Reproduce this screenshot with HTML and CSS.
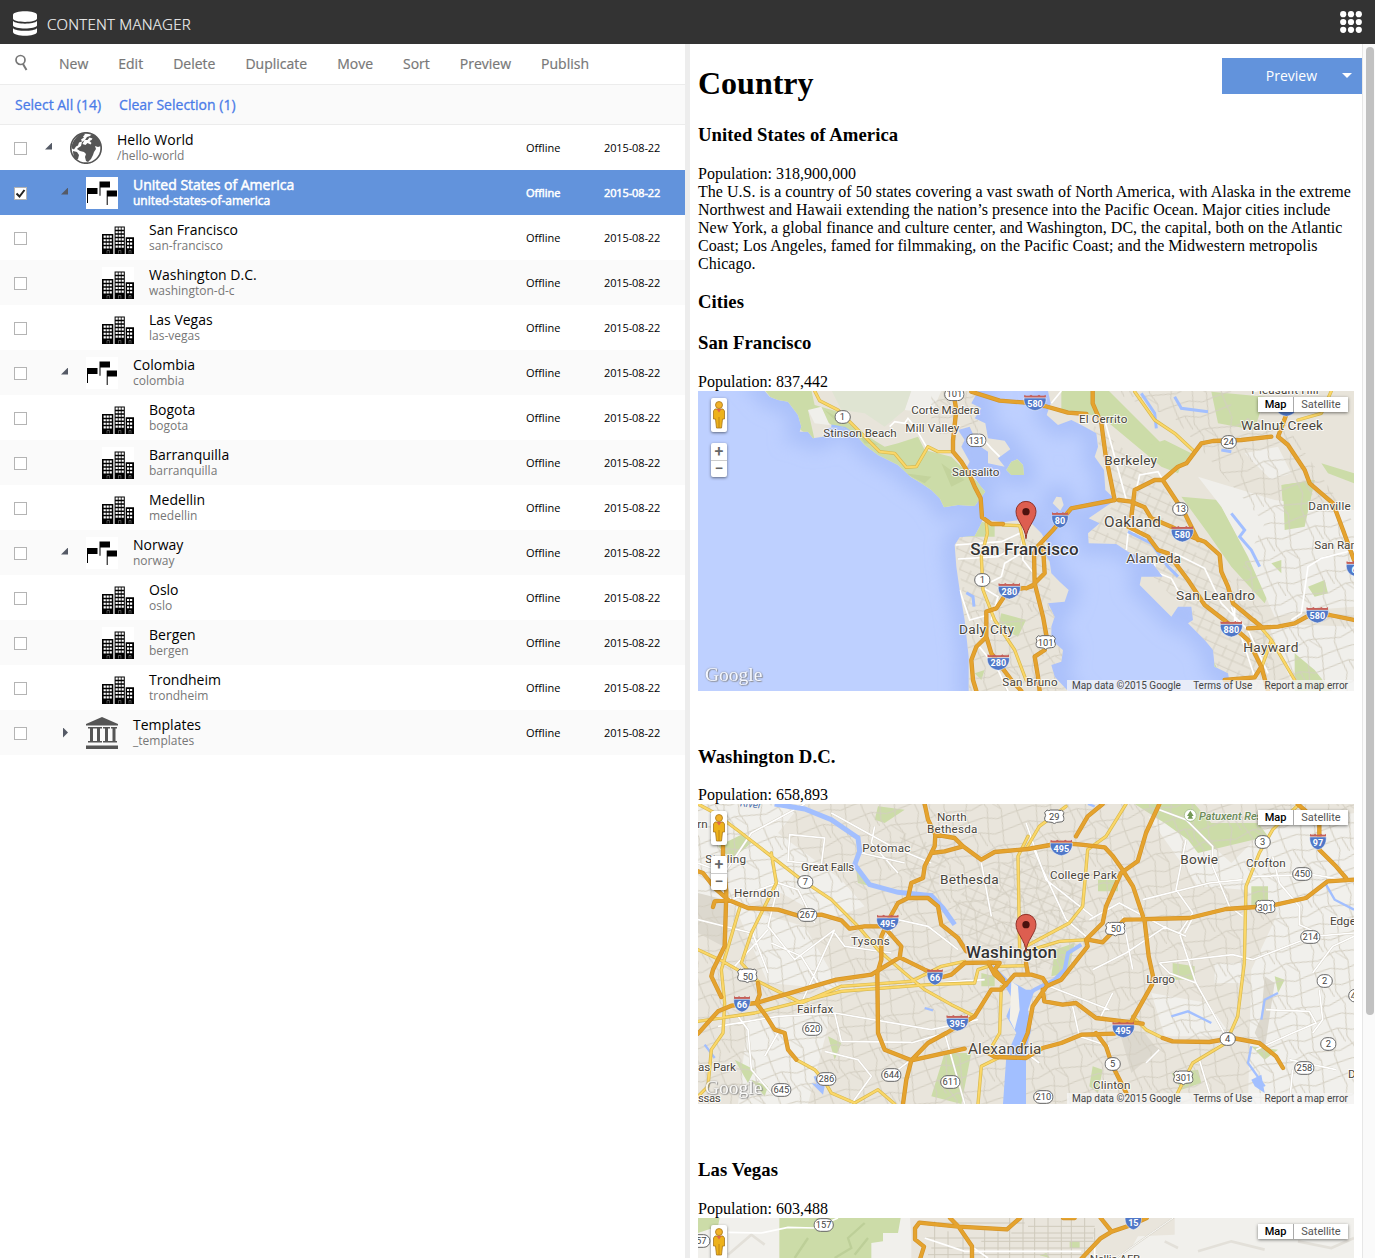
FILE: index.html
```html
<!DOCTYPE html>
<html lang="en">
<head>
<meta charset="utf-8">
<title>Content Manager</title>
<link rel="stylesheet" href="styles.css">
</head>
<body>
<svg class="defs" width="0" height="0" aria-hidden="true">
  <symbol id="i-city" viewBox="0 0 32 32">
    <rect class="paper" width="32" height="32"/>
    <path d="M0 12h11.300v20H0zM12.600 4.500h10.200V32H12.600zM23.700 15.300H32V32h-8.300z"/>
    <path class="pane" d="M1.600 14.600h8.200M1.600 18.200h8.200M1.600 21.800h8.200M1.600 25.400h8.200M13.600 6.600h8.200M13.600 10.200h8.200M13.600 13.800h8.200M13.600 17.400h8.200M13.600 21h8.200M13.600 24.600h8.200M25 18h5.600M25 21.600h5.600M25 25.200h5.600"/>
    <path class="door" d="M5 31.500v-3h2.400v3M16.500 31.500v-3h2.400v3M27 31.500v-3h2v3"/>
  </symbol>
  <symbol id="i-flags" viewBox="0 0 32 32">
    <rect class="paper" width="32" height="32"/>
    <path d="M1 11h10.500v6H2v9H1zM13.500 4.500H24v6h-9.500v8.300h-1zM20.700 13.500H31v6h-9.300V28h-1z"/>
  </symbol>
  <symbol id="i-globe" viewBox="0 0 32 32">
    <circle cx="16" cy="16" r="15.200" fill="#fff" stroke="#555" stroke-width="1.700"/>
    <path fill="#555" d="M3 10C6 5 9 2 13 1.500l2 1-2 2 1 1-3 2 1 2-3 1-1 3-2 1-2 3-2-1L1.500 14zM8 16l3-2 1-4 3-2 2-3 3-1 2-2c5 2 8 7 9 12l-3 1-3-1 1 3-2 3-1 3-2 4-3 3-2-1-1-4 1-3-2-2-4-1-3-2zM3 19l4 1 2 3-1 4-2 1C4 26 3 22 3 19z"/>
    <path fill="#fff" d="M12.500 12l3 1 2-2 3 1.500 1-1.500-2-2 2-1 1-1.500-3-1-2 2.500-3 0z"/>
  </symbol>
  <symbol id="i-bank" viewBox="0 0 32 32">
    <path fill="#555" d="M16 0l16 7v1.500H0V7zM2 10h7v1.400H7V24h2v1.500H2V24h2V11.400H2zM9 10h7v1.400h-2V24h2v1.500H9V24h2V11.400H9zM17 10h7v1.400h-2V24h2v1.500h-7V24h2V11.400h-2zM25 10h6v1.400h-1.500V24H31v1.500h-7V24h2.500V11.400H25zM0 28.500h32V32H0z"/>
  </symbol>
  <symbol id="s-i" viewBox="0 0 70 50" preserveAspectRatio="none" overflow="visible">
    <path d="M3 4h64v6H3z" fill="#c4605a"/><path d="M3 1l5 4h10l5-4 5 4h14l5-4 5 4h10l5-4v7H3z" fill="#c4605a"/>
    <path d="M2 11h66c2 18-9 34-33 38C11 45 0 29 2 11z" fill="#5078c8" stroke="#fff" stroke-width="1.500"/>
  </symbol>
  <symbol id="s-o" viewBox="0 0 62 42"><rect x="2" y="2" width="58" height="38" rx="19" fill="#fff" stroke="#666" stroke-width="3"/></symbol>
  <symbol id="s-c" viewBox="0 0 50 42"><rect x="2" y="2" width="46" height="38" rx="19" fill="#fff" stroke="#666" stroke-width="3"/></symbol>
  <symbol id="s-u" viewBox="0 0 62 46"><path d="M9 3q5 4 11 0h22q6 4 11 0l7 8q-6 8 0 16 1 12-12 12-12 0-17 5-5-5-17-5Q1 39 2 27q6-8 0-16z" fill="#fff" stroke="#666" stroke-width="3"/></symbol>
  <symbol id="pin" viewBox="0 0 66 116">
    <path d="M33 114C31 78 3 60 3 32a30 30 0 0 1 60 0C63 60 35 78 33 114z" fill="#dd5e50" stroke="#8f3229" stroke-width="3"/>
    <circle cx="33" cy="33" r="11" fill="#4c120e"/>
  </symbol>
  <symbol id="pegman" viewBox="0 0 12 28">
    <circle cx="6" cy="4" r="3.500" fill="#f2b229" stroke="#a8761b" stroke-width=".8"/>
    <path d="M2 8h8l1.500 2v8H9.500l-1 9h-5l-1-9H.5v-8z" fill="#edb21c" stroke="#a8761b" stroke-width=".8"/>
    <path d="M3.500 8h5L6 11.500z" fill="#df6549"/><path d="M6 16v11" stroke="#b57b12" stroke-width=".8"/>
  </symbol>
  <pattern id="streets" width="150" height="138" patternUnits="userSpaceOnUse" patternTransform="rotate(-14)">
    <path d="M0 22L48 15 92 30 150 22M0 75L40 82 95 66 150 75M0 118L70 112 110 125 150 118M25 0L35 50 20 90 25 138M78 0L70 45 88 88 78 138M122 0L112 60 128 100 122 138M48 15L62 60M95 66L128 100" fill="none" stroke="#d3cec1" stroke-width="3"/>
  </pattern>
  <pattern id="blocks" width="66" height="54" patternUnits="userSpaceOnUse" patternTransform="rotate(24)">
    <path d="M0 10H66M0 36H66M12 0V54M45 0V36" fill="none" stroke="#d0cbbe" stroke-width="2.500"/>
  </pattern>
  <filter id="soft"><feGaussianBlur stdDeviation="26"/></filter>
</svg>

<header class="topbar">
  <svg class="logo" viewBox="0 0 24 25"><path fill="#fff" d="M0 4C0-1 24-1 24 4v3.500C24 12 0 12 0 7.500zM0 10c3 3.500 21 3.500 24 0v4.500c-1 4-23 4-24 0zM0 17.200c3 3.500 21 3.500 24 0V21c-1 5-23 5-24 0z"/></svg>
  <span class="app-name">CONTENT MANAGER</span>
  <svg class="launcher" viewBox="0 0 22 22" fill="#fff"><circle cx="3.200" cy="3.200" r="3.100"/><circle cx="11" cy="3.200" r="3.100"/><circle cx="18.800" cy="3.200" r="3.100"/><circle cx="3.200" cy="11" r="3.100"/><circle cx="11" cy="11" r="3.100"/><circle cx="18.800" cy="11" r="3.100"/><circle cx="3.200" cy="18.800" r="3.100"/><circle cx="11" cy="18.800" r="3.100"/><circle cx="18.800" cy="18.800" r="3.100"/></svg>
</header>

<main class="workspace">
  <section class="browser">
    <nav class="toolbar">
      <svg class="search" viewBox="0 0 14 18"><circle cx="5.500" cy="6" r="4.500" fill="none" stroke="#777" stroke-width="1.700"/><path d="M8 10l3.500 6" stroke="#777" stroke-width="2"/></svg>
      <span>New</span><span>Edit</span><span>Delete</span><span>Duplicate</span><span>Move</span><span>Sort</span><span>Preview</span><span>Publish</span>
    </nav>
    <div class="selection"><a>Select All (14)</a><a>Clear Selection (1)</a></div>
    <div class="tree">
      <div class="row l0"><i class="box"></i><i class="arrow open"></i><svg class="icon"><use href="#i-globe"/></svg><div class="names"><b>Hello World</b><small>/hello-world</small></div><span class="status">Offline</span><span class="date">2015-08-22</span></div>
      <div class="row l1 selected"><i class="box"><svg viewBox="0 0 11 11"><path d="M1.500 5.500l3 3 5-6.500" fill="none" stroke="#222" stroke-width="2"/></svg></i><i class="arrow open"></i><svg class="icon"><use href="#i-flags"/></svg><div class="names"><b>United States of America</b><small>united-states-of-america</small></div><span class="status">Offline</span><span class="date">2015-08-22</span></div>
      <div class="row l2"><i class="box"></i><i class="arrow"></i><svg class="icon"><use href="#i-city"/></svg><div class="names"><b>San Francisco</b><small>san-francisco</small></div><span class="status">Offline</span><span class="date">2015-08-22</span></div>
      <div class="row l2"><i class="box"></i><i class="arrow"></i><svg class="icon"><use href="#i-city"/></svg><div class="names"><b>Washington D.C.</b><small>washington-d-c</small></div><span class="status">Offline</span><span class="date">2015-08-22</span></div>
      <div class="row l2"><i class="box"></i><i class="arrow"></i><svg class="icon"><use href="#i-city"/></svg><div class="names"><b>Las Vegas</b><small>las-vegas</small></div><span class="status">Offline</span><span class="date">2015-08-22</span></div>
      <div class="row l1"><i class="box"></i><i class="arrow open"></i><svg class="icon"><use href="#i-flags"/></svg><div class="names"><b>Colombia</b><small>colombia</small></div><span class="status">Offline</span><span class="date">2015-08-22</span></div>
      <div class="row l2"><i class="box"></i><i class="arrow"></i><svg class="icon"><use href="#i-city"/></svg><div class="names"><b>Bogota</b><small>bogota</small></div><span class="status">Offline</span><span class="date">2015-08-22</span></div>
      <div class="row l2"><i class="box"></i><i class="arrow"></i><svg class="icon"><use href="#i-city"/></svg><div class="names"><b>Barranquilla</b><small>barranquilla</small></div><span class="status">Offline</span><span class="date">2015-08-22</span></div>
      <div class="row l2"><i class="box"></i><i class="arrow"></i><svg class="icon"><use href="#i-city"/></svg><div class="names"><b>Medellin</b><small>medellin</small></div><span class="status">Offline</span><span class="date">2015-08-22</span></div>
      <div class="row l1"><i class="box"></i><i class="arrow open"></i><svg class="icon"><use href="#i-flags"/></svg><div class="names"><b>Norway</b><small>norway</small></div><span class="status">Offline</span><span class="date">2015-08-22</span></div>
      <div class="row l2"><i class="box"></i><i class="arrow"></i><svg class="icon"><use href="#i-city"/></svg><div class="names"><b>Oslo</b><small>oslo</small></div><span class="status">Offline</span><span class="date">2015-08-22</span></div>
      <div class="row l2"><i class="box"></i><i class="arrow"></i><svg class="icon"><use href="#i-city"/></svg><div class="names"><b>Bergen</b><small>bergen</small></div><span class="status">Offline</span><span class="date">2015-08-22</span></div>
      <div class="row l2"><i class="box"></i><i class="arrow"></i><svg class="icon"><use href="#i-city"/></svg><div class="names"><b>Trondheim</b><small>trondheim</small></div><span class="status">Offline</span><span class="date">2015-08-22</span></div>
      <div class="row l1"><i class="box"></i><i class="arrow closed"></i><svg class="icon"><use href="#i-bank"/></svg><div class="names"><b>Templates</b><small>_templates</small></div><span class="status">Offline</span><span class="date">2015-08-22</span></div>
    </div>
  </section>

  <section class="preview">
    <article class="page">
      <h1>Country</h1>
      <h3>United States of America</h3>
      <div class="copy">Population: 318,900,000<br>The U.S. is a country of 50 states covering a vast swath of North America, with Alaska in the extreme<br>Northwest and Hawaii extending the nation’s presence into the Pacific Ocean. Major cities include<br>New York, a global finance and culture center, and Washington, DC, the capital, both on the Atlantic<br>Coast; Los Angeles, famed for filmmaking, on the Pacific Coast; and the Midwestern metropolis<br>Chicago.</div>
      <h3>Cities</h3>

      <h3>San Francisco</h3>
      <div class="copy">Population: 837,442</div>
      <div class="map">
        <svg class="canvas" viewBox="0 3 1968 900">
          <defs>
            <path id="sf-land" d="M200 3L215 20 240 30 270 35 300 75 310 110 305 125 330 125 345 145 375 140 385 115 430 110 470 130 500 165 540 195 600 225 640 262 670 280 700 300 725 325 738 352 780 345 830 348 850 320 862 305 845 285 825 255 805 235 815 215 790 170 800 150 780 120 815 110 840 165 870 185 870 220 920 230 900 205 937 178 920 152 870 145 862 100 830 85 850 55 820 40 840 3zM925 240L940 215 958 208 975 225 978 255 940 255zM1064 340L1075 320 1090 322 1097 345 1087 362 1076 352zM770 465L785 442 830 438 845 410 855 388 915 397 965 390 1000 400 1030 430 1048 460 1040 490 1055 515 1060 550 1085 575 1112 600 1100 635 1050 640 1070 680 1060 710 1060 750 1095 780 1090 815 1060 825 1070 860 1110 903H812L812 800 800 690 785 600 775 530zM1050 3L1058 40 1046 75 1080 105 1120 90 1160 110 1195 130 1200 170 1190 200 1218 240 1222 300 1245 322 1245 335 1172 385 1205 400 1170 430 1172 460 1255 462 1290 485 1364 520 1394 560 1330 560 1325 585 1420 680 1440 650 1480 650 1485 690 1470 700 1520 750 1545 780 1550 830 1590 850 1600 903H1968V3z"/>
            <clipPath id="sf-clip"><use href="#sf-land"/></clipPath>
            <g id="sf-hwy"><path d="M765 3L775 60 765 150 765 185 790 215 815 255 830 290 848 325 852 382 880 402 915 402"/><path d="M820 5L905 32 984 38 1040 48 1110 68 1165 72M1184 3L1184 40 1210 100 1222 190 1250 330M1262 330L1300 335 1340 352 1360 385 1420 410 1480 440 1520 455 1565 495 1570 545 1590 590 1605 640 1665 690 1690 710"/><path d="M1018 470L1065 420 1120 355 1250 330M1018 470L1008 490 1010 580 1035 680 1045 735M1035 470L1040 550 1005 585 985 595M1040 780L1010 800 1020 860 1025 903M1300 380L1310 300 1370 270 1394 270 1440 230 1465 220 1510 160 1545 153 1630 150 1720 140M1394 270L1460 370 1500 450M1290 410L1350 440 1380 480 1410 490 1470 570 1520 645 1610 715 1650 750 1690 830 1710 903M1650 715L1740 710 1790 700 1830 678 1895 675 1968 690M1690 830L1670 862 1580 870M1770 60L1740 140 1770 165 1820 240 1835 280 1905 340 1935 420 1968 510M915 625L895 655 865 665 865 740 835 770 820 810 825 870 835 903M865 740L880 790 940 870 970 903M968 596L1000 590"/></g>
            <g id="sf-sec"><path d="M350 3L365 32 420 60 500 140 545 185 590 190 625 232 655 230 690 170 720 185 762 185M865 400L868 430 850 500 855 600 890 690 950 780 984 870M915 405L965 407 980 470M1310 5L1370 90 1430 130 1484 180M1800 90L1870 70 1900 3M1670 690L1720 750 1790 870M1720 750L1690 835"/></g>
          </defs>
          <rect y="3" width="1968" height="900" fill="#bed0ff"/>
          <use href="#sf-land" fill="none" stroke="#a2b9f7" stroke-opacity=".65" stroke-width="70" filter="url(#soft)"/>
          <use href="#sf-land" fill="#e8e4da"/>
          <g clip-path="url(#sf-clip)">
            <path fill="#ccdca8" d="M200 0L340 0 350 45 420 65 470 115 560 170 600 160 660 140 680 180 760 200 800 240 865 300 830 360H730L600 240 470 150 410 110 330 60 350 150 280 100zM780 440L845 395 890 400 890 440zM1230 0L1410 180 1460 200 1440 250 1390 230 1210 80 1090 60V0zM1450 320L1560 330 1620 440 1720 590 1700 640 1600 530 1530 430zM1540 5L1700 20 1670 120 1560 100zM1750 285L1850 270 1820 410 1760 420zM1480 840L1540 800 1560 840zM910 670L984 690 960 740 900 710zM830 850L860 840 850 870zM920 205H990V260H920z"/>
            <path fill="#c3d39c" d="M380 60L440 95 420 100zM480 130L540 165 500 160zM620 250L700 260 680 280zM730 220L800 270 760 290z"/>
            <path fill="#f0efeb" d="M1500 260L1730 330 1968 360V650L1840 660 1730 680 1650 500 1570 350zM1640 190L1740 170 1780 250 1720 270zM1710 700L1968 710V903H1790zM330 60L370 50 395 105 350 100zM640 3L730 3 700 70 620 60z"/>
            <path fill="#dfe4d2" d="M400 0H640L620 60 560 110 500 70 430 60z"/>
            <path fill="#ccdca8" d="M1830 590L1880 570 1890 610 1850 620zM1720 520L1750 510 1750 550zM1870 220L1968 250V280L1890 250zM1790 790L1850 840 1900 903H1790zM1755 285L1850 270 1820 410 1760 420zM1340 170L1400 150 1480 190 1440 240z"/>
            <path fill="url(#blocks)" d="M1180 100L1280 180 1400 300 1500 430 1650 650 1730 750 1700 900H1600L1450 650 1290 480 1160 440 1260 330zM770 440H1050L1060 640 800 650z"/>
            <path fill="url(#streets)" d="M700 0H840V180L700 120zM790 640H1110V903H800zM1400 50L1760 100 1968 400V903H1700L1600 600 1700 400zM1230 0H1600V160z"/>
            <path class="minor" d="M575 110L590 95 620 100 630 85 650 110 685 170M1220 90L1285 330M1310 320L1325 255 1380 245 1394 270M1330 420L1290 430 1285 480M1430 490L1520 535 1570 640 1650 720 1710 850M1370 520L1370 545 1420 565 1450 620M1600 650L1670 860M1780 690L1810 670 1830 530 1870 505 1968 480M840 130L880 175 905 200M773 465L910 455 965 430M780 507L900 500 960 465M880 575L910 560 920 520 970 490M785 600L815 690 870 675M850 590L900 620 880 690M1060 40L1090 3M840 765L900 840 930 903M970 400L975 510 1015 560M1610 650V703"/>
            <path fill="none" stroke="#a2bfff" stroke-width="9" d="M400 108L440 115 470 135M1290 425L1360 460 1410 530 1440 560M1430 20L1450 55 1530 65M1600 370L1640 420 1625 440 1660 480 1685 530M1330 10L1370 70 1375 115M805 608L825 620 828 650M1570 180L1600 185"/>
          </g>
          <g class="road"><use href="#sf-sec" stroke="#d8b94e" stroke-width="10"/><use href="#sf-sec" stroke="#fbd768" stroke-width="6"/><use href="#sf-hwy" stroke="#d3942a" stroke-width="13"/><use href="#sf-hwy" stroke="#e5a32e" stroke-width="9"/></g>
          <g class="shields"><use href="#s-c" x="409" y="60" width="50" height="42"/><use href="#s-o" x="738" y="-8" width="62" height="42"/><use href="#s-o" x="804" y="130" width="62" height="42"/><use href="#s-c" x="828" y="549" width="50" height="42"/><use href="#s-c" x="1567" y="135" width="50" height="42"/><use href="#s-c" x="1422" y="336" width="50" height="42"/><use href="#s-u" x="1012" y="734" width="62" height="46"/></g>
          <g class="num"><text x="433" y="91">1</text><text x="769" y="21">101</text><text x="835" y="161">131</text><text x="853" y="580">1</text><text x="1592" y="166">24</text><text x="1448" y="367">13</text><text x="1043" y="768">101</text></g>
          <g><use href="#s-i" x="976" y="13" width="70" height="50"/><use href="#s-i" x="899" y="578" width="70" height="50"/><use href="#s-i" x="866" y="792" width="70" height="50"/><use href="#s-i" x="1060" y="365" width="52" height="50"/><use href="#s-i" x="1418" y="407" width="70" height="50"/><use href="#s-i" x="1565" y="692" width="70" height="50"/><use href="#s-i" x="1823" y="650" width="70" height="50"/><use href="#s-i" x="1943" y="512" width="70" height="50"/><use href="#s-i" x="1730" y="30" width="70" height="50"/></g>
          <g class="inum"><text x="1011" y="51">580</text><text x="934" y="616">280</text><text x="901" y="829">280</text><text x="1086" y="402">80</text><text x="1453" y="444">580</text><text x="1600" y="729">880</text><text x="1858" y="687">580</text><text x="1968" y="550">6</text></g>
          <g class="place"><text x="640" y="72" textLength="205">Corte Madera</text><text x="376" y="140" textLength="220">Stinson Beach</text><text x="622" y="125" textLength="162">Mill Valley</text><text x="762" y="257" textLength="142">Sausalito</text><text x="913" y="888" textLength="166">San Bruno</text><text x="1143" y="99" textLength="145">El Cerrito</text><text x="1660" y="13" textLength="202">Pleasant Hill</text><text x="1831" y="360" textLength="127">Danville</text><text x="1849" y="477">San Ramon</text></g>
          <g class="place mid"><text x="783" y="732" textLength="165">Daly City</text><text x="1219" y="225" textLength="158">Berkeley</text><text x="1629" y="119" textLength="246">Walnut Creek</text><text x="1285" y="518" textLength="164">Alameda</text><text x="1434" y="629" textLength="237">San Leandro</text><text x="1636" y="785" textLength="165">Hayward</text></g>
          <g class="place big"><text x="1218" y="412" textLength="171">Oakland</text><text class="major" x="817" y="494" textLength="325">San Francisco</text></g>
          <use href="#pin" x="951" y="332" width="66" height="116"/>
        </svg>
        <div class="peg"><svg><use href="#pegman"/></svg></div><div class="zoom"><span>+</span><span>−</span></div>
        <div class="types"><span class="on">Map</span><span>Satellite</span></div>
        <div class="google">Google</div>
        <div class="credit"><span>Map data ©2015 Google</span><span>Terms of Use</span><span>Report a map error</span></div>
      </div>

      <h3>Washington D.C.</h3>
      <div class="copy">Population: 658,893</div>
      <div class="map">
        <svg class="canvas" viewBox="0 3 1968 900">
          <defs>
            <g id="dc-hwy"><path d="M0 205L15 210 50 255 90 290 150 315 240 320 300 338 370 335 430 352 455 377 500 370 570 370M45 312L50 295 90 290M75 130V160L85 270 80 430 45 500 40 520 70 582M0 692L60 625 100 608 175 600 415 530 520 515 605 463 680 500 735 522 760 515 800 480 870 478 890 515 925 545M680 3L690 50 712 95 710 130 680 190 675 225 640 240 630 285 600 300 575 345 550 400 550 470 538 510 540 690 560 740 640 772 625 830 615 903M712 95L770 105 795 130 850 170 890 147 990 138 1090 120 1150 125 1220 133 1245 160 1270 195 1305 250 1340 355 1352 460 1365 520 1362 545 1300 655M700 150L740 145 795 130M570 385L610 430 605 463M630 285L690 285 720 310 730 365 780 405 805 445M640 772L690 720 745 690 830 640 880 560 910 560 950 515 1000 515 1034 525 1049 548 1090 530 1169 430 1164 410 1214 360 1224 310 1269 210M640 772L800 737M870 750L890 762 984 765 1034 735 1090 720 1150 695 1250 692M180 540L185 575 175 600 205 640 230 680 260 690 270 740 295 770M1134 100L1169 40 1214 3M1384 3L1344 90 1319 175 1269 210M1169 410L1214 418 1279 350 1474 345 1584 318 1674 312M1734 305L1824 285 1889 235 1968 230M1034 560L1039 595 1094 605 1134 600 1194 645 1334 662M1049 545L1004 610 989 690 968 740M1194 690L1224 730 1244 790 1285 870M1394 705L1424 715 1534 717 1604 705 1684 720 1734 760 1755 795M1799 3L1864 60 1864 140 1914 190 1944 225M870 478L905 480 890 500 915 530M984 480L990 515"/></g>
            <g id="dc-sec"><path d="M0 3L50 30 130 90 310 230 400 290 480 370 540 440 620 510 680 560 760 605 830 640M220 150L235 240 160 390 130 480 180 535 310 600M0 440L65 470 180 535M125 315L70 500 80 600 75 690 40 740 30 850 0 880M0 655L170 630 430 565 690 545 830 540 840 500 870 490M430 550L640 535 730 490 800 475M310 600L430 550M295 770L350 800 380 835 400 870 470 900 540 860 590 903M984 430L1114 360 1154 310 1169 140 1224 100 1284 3M984 445L1084 415 1169 410M1104 10L1024 70 984 138M1804 3L1724 80 1684 150 1644 250 1639 480 1619 640 1584 720 1484 780 1434 880M1304 640L1344 680 1394 705M850 790L840 903M850 790L900 765M990 100L960 160 965 450M905 490L984 488M910 550L905 690 870 750"/></g>
            <g id="dc-min"><path d="M0 180L80 210 160 90 320 3M275 95L380 105 370 185 270 175zM240 250L210 370 290 470 410 380M100 290L240 240 300 260 350 360M210 380L110 490M120 640L150 680 160 800 220 870M60 670L240 640 410 630 700 680 840 650M410 630L430 715 640 718M540 440L600 350 690 370 780 440M400 30L580 130 700 180M530 70L520 120 600 210M620 180L490 150M160 380L210 510M310 600L410 380M640 720L740 690 800 903M850 180L880 340M1004 130L1034 200 1104 350 1164 400M984 60L1044 230 1184 340M1174 350L1264 300 1394 370 1464 400M1334 290L1534 240 1634 230M1384 20L1464 50 1544 130 1544 190 1594 310 1634 340M1464 110L1434 260 1484 330 1444 390 1494 540 1584 700M1184 500L1284 450 1404 370M1384 480L1604 455 1664 470 1844 400 1968 390M1384 480L1414 510 1494 540M1844 510L1904 430 1968 400M1724 160L1744 240 1804 310 1804 365 1860 390M1664 220L1844 215 1968 235M1704 620L1834 625 1854 660 1784 690 1674 740M1864 560L1874 650 1844 690M1774 770L1914 800M1574 720L1504 770 1544 903M1124 610L1144 700 1234 730M1344 780L1384 740M1024 780L984 750M1054 550L1234 620M1244 570L1204 650M220 420L310 460 360 540M0 350L160 390M410 390L440 430 580 450M700 540L860 530M560 830L640 770M380 745L480 770 520 820 460 903M240 690L200 760M1784 800L1774 903M1484 345L1460 390M1304 500L1274 340"/></g>
          </defs>
          <rect y="3" width="1968" height="900" fill="#e9e5dc"/>
          <path fill="#f1f0ec" d="M0 3H310L240 90 430 230 500 310 390 350 250 270 130 310 0 290zM110 310L320 370 430 560 210 540zM150 650L400 630 330 903H120zM1350 40L1500 90 1600 180 1700 80 1968 30V903H1650L1660 500 1740 330 1640 260 1500 250zM1360 570L1530 600 1600 700 1400 700zM1550 480H1630V540H1550z"/>
          <path fill="#dcd8ce" d="M0 270L80 290 75 430 0 390zM1260 670L1340 690 1380 740 1300 810zM1670 690L1690 640 1700 520 1730 540 1700 740z"/>
          <path fill="#ccdca8" d="M540 10L620 20 560 60 530 50zM1310 3L1490 3 1540 60 1680 60 1710 100 1500 150 1470 110 1400 60zM1424 480L1490 490 1490 530 1424 530zM1660 250H1710V310H1660zM1200 230H1260V265H1200zM740 750L820 750 790 903 700 880zM850 510L890 520 890 550 850 550zM1420 810L1500 800 1510 840 1450 860zM160 830L210 850 200 880zM1660 730L1740 740 1700 770zM1070 440L1130 420 1110 510 1060 520zM60 130L140 90 160 120 100 170zM470 170L500 230 560 260 480 240zM390 700L430 720 410 770zM110 770L170 800 150 840zM1184 790L1214 800 1200 870 1174 850zM1730 520L1760 530 1740 570z"/>
          <path fill="url(#streets)" d="M0 3H1968V903H0z"/>
          <path fill="url(#blocks)" d="M760 300L870 200 984 150 1150 250 1170 400 1060 500 850 470zM600 80L760 150 700 300 640 250z"/>
          <use href="#dc-min" fill="none" stroke="#d3cec2" stroke-width="7"/><use href="#dc-min" fill="none" stroke="#fff" stroke-width="5"/>
          <g fill="none" stroke="#a2bfff"><path stroke-width="15" d="M230 3L320 18 400 50 480 105 485 145 470 185 515 245 600 268 700 278 735 315 770 365"/><path stroke-width="12" d="M984 580L1010 560 1070 530 1100 500 1110 450 1150 425"/><path stroke-width="7" d="M350 820L370 865M680 615L705 622M1884 245L1910 290 1968 320M1740 570L1700 590 1690 650M1660 730L1650 780 1700 850M20 725L50 765M1420 640L1470 625 1540 660M1170 3L1190 10"/></g>
          <path fill="#a2bfff" d="M880 480L930 530 984 560 1010 560 990 620 1000 680 984 740 984 903H915L925 760 955 690 925 640 945 590zM1660 830L1690 815 1700 870 1670 850zM340 840L380 850 375 875z"/>
          <path fill="#f3f0e8" d="M940 535L960 550 965 620 950 680 935 650z"/>
          <g class="road"><use href="#dc-sec" stroke="#d8b94e" stroke-width="10"/><use href="#dc-sec" stroke="#fbd768" stroke-width="6"/><use href="#dc-hwy" stroke="#d3942a" stroke-width="13"/><use href="#dc-hwy" stroke="#e5a32e" stroke-width="9"/></g>
          <g><use href="#s-c" x="297" y="216" width="50" height="42"/><use href="#s-o" x="297" y="315" width="62" height="42"/><use href="#s-o" x="312" y="657" width="62" height="42"/><use href="#s-o" x="354" y="807" width="62" height="42"/><use href="#s-o" x="219" y="840" width="62" height="42"/><use href="#s-o" x="549" y="795" width="62" height="42"/><use href="#s-o" x="726" y="816" width="62" height="42"/><use href="#s-u" x="117" y="495" width="62" height="46"/><use href="#s-u" x="1038" y="18" width="62" height="46"/><use href="#s-u" x="1221" y="355" width="62" height="46"/><use href="#s-u" x="1671" y="289" width="62" height="46"/><use href="#s-u" x="1425" y="801" width="62" height="46"/><use href="#s-c" x="1669" y="96" width="50" height="42"/><use href="#s-o" x="1782" y="192" width="62" height="42"/><use href="#s-o" x="1806" y="381" width="62" height="42"/><use href="#s-c" x="1855" y="513" width="50" height="42"/><use href="#s-c" x="1866" y="702" width="50" height="42"/><use href="#s-c" x="1564" y="687" width="50" height="42"/><use href="#s-o" x="1788" y="774" width="62" height="42"/><use href="#s-c" x="1219" y="762" width="50" height="42"/><use href="#s-o" x="1005" y="861" width="62" height="42"/><use href="#s-c" x="1950" y="557" width="50" height="42"/></g>
          <g class="num"><text x="322" y="247">7</text><text x="328" y="346">267</text><text x="343" y="688">620</text><text x="385" y="838">286</text><text x="250" y="871">645</text><text x="580" y="826">644</text><text x="757" y="847">611</text><text x="150" y="530">50</text><text x="1069" y="51">29</text><text x="1254" y="388">50</text><text x="1702" y="323">301</text><text x="1456" y="835">301</text><text x="1694" y="127">3</text><text x="1813" y="223">450</text><text x="1837" y="412">214</text><text x="1880" y="544">2</text><text x="1891" y="733">2</text><text x="1589" y="718">4</text><text x="1819" y="805">258</text><text x="1244" y="793">5</text><text x="1036" y="892">210</text><text x="1966" y="588">4</text></g>
          <g><use href="#s-i" x="534" y="334" width="70" height="50"/><use href="#s-i" x="686" y="497" width="50" height="50"/><use href="#s-i" x="743" y="635" width="70" height="50"/><use href="#s-i" x="106" y="578" width="52" height="50"/><use href="#s-i" x="1055" y="109" width="70" height="50"/><use href="#s-i" x="1241" y="655" width="70" height="50"/><use href="#s-i" x="1834" y="91" width="52" height="50"/></g>
          <g class="inum"><text x="569" y="373">495</text><text x="711" y="534">66</text><text x="778" y="672">395</text><text x="132" y="615">66</text><text x="1090" y="147">495</text><text x="1275" y="692">495</text><text x="1860" y="129">97</text></g>
          <g class="place"><text x="-2" y="75">rn</text><text x="22" y="180" textLength="122">Sterling</text><text x="108" y="283" textLength="137">Herndon</text><text x="309" y="203" textLength="160">Great Falls</text><text x="493" y="147" textLength="144">Potomac</text><text x="717" y="53" textLength="89">North</text><text x="687" y="89" textLength="151">Bethesda</text><text x="459" y="426" textLength="116">Tysons</text><text x="297" y="629" textLength="109">Fairfax</text><text x="0" y="803" textLength="114">as Park</text><text x="0" y="896" textLength="68">ssas</text><text x="1056" y="227" textLength="201">College Park</text><text x="1644" y="191" textLength="119">Crofton</text><text x="1345" y="539" textLength="86">Largo</text><text x="1185" y="857" textLength="112">Clinton</text><text x="1896" y="365">Edgewater</text><text x="1950" y="824">Du</text></g>
          <text class="river" x="125" y="10" transform="rotate(6 125 10)">River</text>
          <circle cx="1477" cy="37" r="18" fill="#fff" stroke="#96b379" stroke-width="2"/><path d="M1477 23l10 16h-6l4 8h-16l4-8h-6z" fill="#749955"/><text class="park" x="1503" y="50">Patuxent Rese</text>
          <g class="place mid"><text x="726" y="243" textLength="176">Bethesda</text><text x="1447" y="183" textLength="113">Bowie</text></g>
          <g class="place big"><text x="810" y="752" textLength="220">Alexandria</text><text class="major" x="804" y="465" textLength="273">Washington</text></g>
          <use href="#pin" x="951" y="332" width="66" height="116"/>
        </svg>
        <div class="peg"><svg><use href="#pegman"/></svg></div><div class="zoom"><span>+</span><span>−</span></div>
        <div class="types"><span class="on">Map</span><span>Satellite</span></div>
        <div class="google">Google</div>
        <div class="credit"><span>Map data ©2015 Google</span><span>Terms of Use</span><span>Report a map error</span></div>
      </div>

      <h3>Las Vegas</h3>
      <div class="copy">Population: 603,488</div>
      <div class="map">
        <svg class="canvas" viewBox="0 0 1968 900">
          <defs><g id="lv-hwy"><path d="M756 0L782 26 822 85V130M664 130L678 86 651 64V31L664 14 782 26 927 34 966 0M1346 0L1300 21 1241 41 1208 61 1143 130M1208 0L1241 41M1095 0H1130"/></g></defs>
          <rect width="1968" height="900" fill="#f1f0ec"/>
          <path fill="#e9e5dc" d="M636 0H1430V50L1320 55 1300 90 1240 120H640V60z"/>
          <path fill="#ccdca8" d="M244 0H608L600 45H555V70L520 75V120H244zM0 0H65L60 25 0 45zM1115 70H1145V90H1115zM1025 112L1045 105 1055 120z"/>
          <path fill="none" stroke="#bdcf98" stroke-width="7" d="M500 15L450 60 460 90 410 120M510 60L470 110M290 120L330 60"/>
          <path fill="none" stroke="#e3e0d9" stroke-width="8" d="M90 110L160 50 200 80M1500 100L1600 70 1700 95M1800 70L1900 90 1968 60M1400 70L1440 90"/>
          <path fill="none" stroke="#cfcabc" stroke-width="3" d="M680 60H1185M700 90H1190M690 110H1180M720 15H980M940 45H1190M850 70H1190M710 10V120M750 40V120M795 50V120M860 30V120M900 40V120M935 0V120M975 0V120M1010 0V120M1050 0V120M1090 0V120M1120 0V120M1160 0V120M1190 30V80M990 25H1190"/>
          <path class="minor" d="M1425 0L1254 120M90 43L190 45 270 28 350 30 420 0M680 60L800 100H1150M1190 85V120M820 85L870 120"/>
          <path fill="none" stroke="#cfcabc" stroke-width="2" d="M1422 0L1251 120M1429 0L1258 120"/>
          <g class="road"><use href="#lv-hwy" stroke="#d3942a" stroke-width="13"/><use href="#lv-hwy" stroke="#e5a32e" stroke-width="9"/></g>
          <use href="#s-o" x="346" y="0" width="62" height="42"/><use href="#s-o" x="-24" y="48" width="62" height="42"/><g class="num"><text x="377" y="31">157</text><text x="10" y="79">57</text></g>
          <use href="#s-i" x="1280" y="-14" width="52" height="50"/><g class="inum"><text x="1306" y="24">15</text></g>
          <g class="place"><text x="1175" y="136" textLength="152">Nellis AFB</text></g>
        </svg>
        <div class="peg"><svg><use href="#pegman"/></svg></div>
        <div class="types"><span class="on">Map</span><span>Satellite</span></div>
      </div>
    </article>
    <button class="preview-btn"><span>Preview</span><i></i></button>
    <div class="scroll"><div class="thumb"></div></div>
  </section>
</main>
</body>
</html>
```
FILE: styles.css
```css
* { box-sizing: border-box; }
body { margin: 0; height: 1258px; overflow: hidden; background: #fff; font-family: "Open Sans", sans-serif; }
.defs { position: absolute; }
.paper { fill: #fff; }
.pane { fill: none; stroke: #fff; stroke-width: 2.1; stroke-dasharray: 2.2 .8; }
.door { fill: none; stroke: #888; stroke-width: .6; }

.topbar { height: 44px; background: #333; display: flex; align-items: center; padding: 0 13px; }
.logo { width: 24px; height: 25px; margin-top: 3px; }
.app-name { color: #f4f4f4; font-size: 15px; margin: 4px auto 0 10px; font-weight: 300; letter-spacing: .25px; -webkit-text-stroke: .2px #f4f4f4; }
.launcher { width: 22px; height: 22px; margin-top: -1px; }

.workspace { display: flex; height: 1214px; }
.browser { width: 690px; flex: none; border-right: 5px solid #ededed; }
.toolbar { height: 41px; border-bottom: 1px solid #ececec; display: flex; align-items: center; gap: 30px; padding: 0 0 2px 15px; font-size: 14px; color: #777; -webkit-text-stroke: .2px #777; }
.search { width: 14px; height: 18px; }
.selection { height: 40px; background: #fafafa; border-bottom: 1px solid #ececec; display: flex; align-items: center; gap: 18px; padding-left: 15px; font-size: 14px; color: #4a7be8; -webkit-text-stroke: .3px #4a7be8; }

.row { height: 45px; display: flex; align-items: center; padding: 0 25px 1px 14px; font-size: 11px; color: #000; }
.row:nth-child(even) { background: #fafafa; }
.row.selected { background: #6293dc; color: #fff; -webkit-text-stroke: .5px #fff; }
.box { width: 13px; height: 13px; border: 1px solid #b4b4b4; background: #fff; flex: none; margin-top: 2px; }
.box svg { display: block; width: 11px; height: 11px; }
.arrow { width: 7px; height: 7px; margin: -2px 17px 0 18px; flex: none; }
.arrow.open { background: #555a66; clip-path: polygon(100% 0, 100% 100%, 0 100%); }
.arrow.closed { height: 10px; width: 5px; margin: 1px 17px 0 20px; background: #555a66; clip-path: polygon(0 0, 100% 50%, 0 100%); }
.l1 .box { margin-right: 16px; }
.l2 .box { margin-right: 32px; }
.icon { width: 32px; height: 32px; flex: none; margin: 2px 15px 0 1px; }
.names { flex: 1; display: flex; flex-direction: column; }
.names b { font-weight: 400; font-size: 14px; line-height: 17px; }
.names small { font-size: 12px; line-height: 16px; color: #777; }
.selected small { color: #fff; }
.status { width: 78px; }
.date { width: 56px; white-space: nowrap; letter-spacing: -.12px; }

.preview { flex: 1; position: relative; display: flex; overflow: hidden; }
.page { width: 672px; padding: 0 8px; font-family: "Liberation Serif", "Times New Roman", serif; font-size: 16px; color: #000; }
.page h1 { font-size: 32px; line-height: 37px; margin: 21px 0 22px; }
.page h3 { font-size: 18.72px; line-height: 22px; margin: 18.72px 0; letter-spacing: .05px; }
.copy { line-height: 18px; white-space: nowrap; letter-spacing: .015px; }
.preview-btn { position: absolute; top: 14px; right: 13px; width: 140px; height: 36px; border: 0; background: #6293dc; color: #fff; font: 14px "Open Sans", sans-serif; display: flex; align-items: center; justify-content: flex-end; gap: 25px; padding: 0 10px 1px; }
.preview-btn i { width: 10px; height: 5px; background: #fff; clip-path: polygon(0 0, 100% 0, 50% 100%); }
.scroll { flex: 1; background: #fafafa; border-left: 1px solid #e7e7e7; padding: 3px 1px 0 3px; }
.thumb { height: 968px; width: 8px; border-radius: 4px; background: #c1c1c1; }

.map { position: relative; height: 300px; margin-bottom: 54.72px; overflow: hidden; font-family: Roboto, sans-serif; }
.canvas { display: block; width: 656px; height: 300px; }
.minor { fill: none; stroke: #fff; stroke-width: 5; }
.road { fill: none; stroke-linejoin: round; stroke-linecap: round; }
.place { font-size: 35px; fill: #4a453b; stroke: #fff; stroke-opacity: .8; stroke-width: 6px; paint-order: stroke; stroke-linejoin: round; }
.mid { font-size: 41px; }
.big { font-size: 46px; }
.major { font-size: 51px; font-weight: 500; fill: #333; }
.num { font-size: 28px; fill: #444; text-anchor: middle; }
.inum { font-size: 27px; font-weight: 700; fill: #fff; text-anchor: middle; }
.park { font-size: 33px; font-style: italic; font-weight: 500; fill: #6b8b58; stroke: #fff; stroke-opacity: .6; stroke-width: 5px; paint-order: stroke; }
.river { font-size: 30px; font-style: italic; fill: #4d70b0; }
.peg, .zoom, .types { position: absolute; background: #fff; box-shadow: 0 1px 3px rgba(0, 0, 0, .5); }
.peg { left: 13px; top: 7px; width: 16px; height: 34px; border-radius: 2px; padding: 3px 2px; }
.peg svg { display: block; width: 12px; height: 28px; }
.zoom { left: 13px; top: 52px; width: 16px; height: 34px; border-radius: 2px; color: #666; font-size: 16px; line-height: 17px; text-align: center; font-weight: 500; }
.zoom span { display: block; height: 17px; }
.zoom span + span { border-top: 1px solid #ccc; line-height: 15px; }
.types { right: 6px; top: 6px; height: 15px; display: flex; font-size: 11px; line-height: 15px; color: #555; }
.types span { width: 54px; text-align: center; }
.types .on { width: 36px; color: #000; font-weight: 500; border-right: 1px solid #aaa; }
.google { position: absolute; left: 7px; bottom: 4px; font: 19.5px/24px "Liberation Serif", serif; color: #fff; text-shadow: 0 0 2px #777, 1px 1px 1px #888; opacity: .85; }
.credit { position: absolute; right: 0; bottom: 0; height: 11px; width: 287px; padding: 0 6px 0 5px; display: flex; justify-content: space-between; background: rgba(245, 245, 245, .75); font-size: 10px; line-height: 11px; color: #444; white-space: nowrap; }
```
